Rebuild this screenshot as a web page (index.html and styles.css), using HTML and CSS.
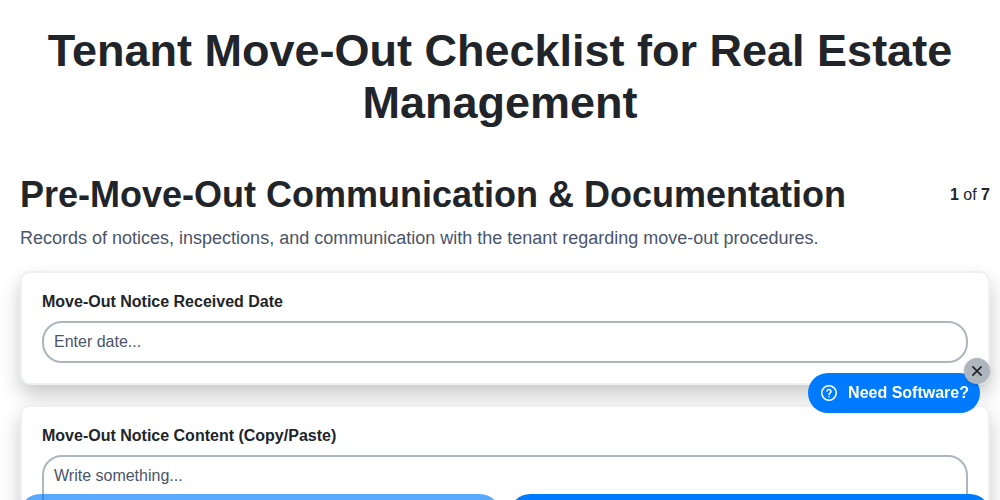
FILE: index.html
```html
<!DOCTYPE html>
<html lang="en">
<head>
    <meta charset="UTF-8">
    <meta name="viewport" content="width=device-width, initial-scale=1.0">
    <title>Tenant Move-Out Checklist for Real Estate Management</title>
    <link rel="stylesheet" href="styles.css">
</head>
<body>
    <div class="container">
        <h1>Tenant Move-Out Checklist for Real Estate Management</h1>

        <div class="section-header">
            <h2>Pre-Move-Out Communication &amp; Documentation</h2>
            <div class="step-count"><strong>1</strong> of <strong>7</strong></div>
        </div>
        <p class="section-desc">Records of notices, inspections, and communication with the tenant regarding move-out procedures.</p>

        <form class="fields">
            <div class="card">
                <label for="notice_date">Move-Out Notice Received Date</label>
                <input id="notice_date" type="text" placeholder="Enter date...">
            </div>
            <div class="card">
                <label for="notice_content">Move-Out Notice Content (Copy/Paste)</label>
                <textarea id="notice_content" rows="6" placeholder="Write something..."></textarea>
            </div>
        </form>
    </div>

    <div class="nav-buttons">
        <button class="nav-btn nav-btn-disabled" type="button" aria-label="Previous"></button>
        <button class="nav-btn" type="button" aria-label="Next"></button>
    </div>

    <div class="software-promo">
        <a class="software-btn" href="#">
            <svg width="18" height="18" viewBox="0 0 18 18" fill="none" stroke="currentColor" stroke-width="1.5" stroke-linecap="round">
                <circle cx="9" cy="9" r="7.25"/>
                <path d="M6.9 7.1a2.15 2.15 0 0 1 4.2.5c0 1.4-2.1 1.7-2.1 2.9"/>
                <path d="M9 12.7v.1"/>
            </svg>
            <span>Need Software?</span>
        </a>
        <button class="close-btn" type="button" aria-label="Close">
            <svg width="12" height="12" viewBox="0 0 12 12" fill="none" stroke="currentColor" stroke-width="1.7" stroke-linecap="round">
                <path d="M1.9 1.9l8.2 8.2M10.1 1.9l-8.2 8.2"/>
            </svg>
        </button>
    </div>
</body>
</html>
```

FILE: styles.css
```css
:root {
    --text-color: #212529;
    --muted-color: #4a5568;
    --primary-color: #007bff;
    --border-color: #adb5bd;
}

* {
    box-sizing: border-box;
    margin: 0;
    padding: 0;
}

body {
    font-family: "Liberation Sans", Arial, sans-serif;
    color: var(--text-color);
    background-color: #ffffff;
    line-height: 1.5;
}

.container {
    padding: 24.5px 10px 80px 20px;
}

h1 {
    font-size: 45px;
    font-weight: 700;
    line-height: 52px;
    text-align: center;
    margin: 0 10px 44.5px 0;
}

.section-header {
    display: flex;
    justify-content: space-between;
    align-items: center;
    gap: 20px;
}

h2 {
    font-size: 36px;
    font-weight: 700;
    line-height: 1.2;
}

.step-count {
    font-size: 16px;
}

.section-desc {
    font-size: 18px;
    color: var(--muted-color);
    margin: 9px 0 19px;
}

.fields {
    display: flex;
    flex-direction: column;
    gap: 20px;
}

.card {
    background-color: #ffffff;
    border: 2px solid #eef0f3;
    border-radius: 10px;
    box-shadow: 0 10px 20px rgba(0, 0, 0, 0.22);
    padding: 17px 20px 20px;
}

label {
    display: block;
    font-size: 16px;
    font-weight: 700;
    margin-bottom: 7px;
}

input,
textarea {
    display: block;
    width: 100%;
    font-family: inherit;
    font-size: 16px;
    color: var(--muted-color);
    border: 2px solid var(--border-color);
    border-radius: 20px;
    padding: 8px 10px;
    background-color: #ffffff;
    outline: none;
}

input {
    height: 42px;
}

textarea {
    padding-top: 10px;
    resize: vertical;
}

input::placeholder,
textarea::placeholder {
    color: var(--muted-color);
    opacity: 1;
}

.nav-buttons {
    position: fixed;
    left: 20px;
    right: 10px;
    bottom: -40px;
    display: flex;
    gap: 10px;
}

.nav-btn {
    flex: 1;
    height: 46px;
    border: none;
    border-radius: 20px;
    background-color: var(--primary-color);
}

.nav-btn-disabled {
    opacity: 0.65;
}

.software-promo {
    position: fixed;
    right: 20px;
    bottom: 87px;
}

.software-btn {
    display: flex;
    align-items: center;
    gap: 10px;
    height: 40px;
    padding: 0 11px 0 12px;
    border-radius: 20px;
    font-size: 16px;
    font-weight: 700;
    color: #ffffff;
    background-color: var(--primary-color);
    text-decoration: none;
}

.close-btn {
    position: absolute;
    top: -15px;
    right: -10px;
    width: 26px;
    height: 26px;
    display: flex;
    align-items: center;
    justify-content: center;
    border: none;
    border-radius: 50%;
    color: var(--text-color);
    background-color: #adb5bd;
    box-shadow: 0 1px 4px rgba(0, 0, 0, 0.15);
}
```
